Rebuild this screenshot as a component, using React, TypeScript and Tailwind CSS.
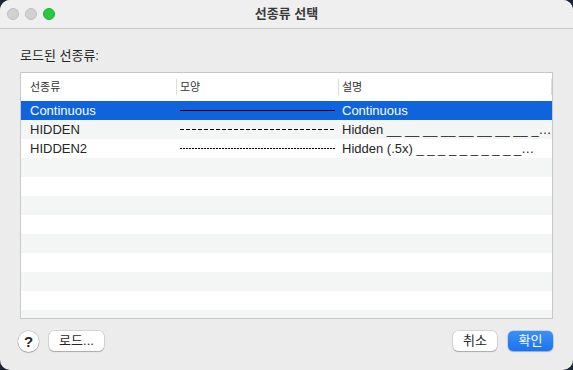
import React from "react";

type Row = { name: string; dash: string | null; desc: string };

const ROWS: Row[] = [
  { name: "Continuous", dash: null, desc: "Continuous" },
  { name: "HIDDEN", dash: "4 2", desc: "Hidden __ __ __ __ __ __ __ __ _…" },
  { name: "HIDDEN2", dash: "2 1", desc: "Hidden (.5x) _ _ _ _ _ _ _ _ _ _…" },
];

const FONT = '"Liberation Sans", "Noto Sans CJK KR", sans-serif';

function LineSample({ dash, color }: { dash: string | null; color: string }) {
  return (
    <svg width="155" height="3" className="block">
      <line
        x1="0"
        y1="1.5"
        x2="155"
        y2="1.5"
        stroke={color}
        strokeWidth="1"
        strokeDasharray={dash ?? undefined}
      />
    </svg>
  );
}

export default function App() {
  const blank = Array.from({ length: 10 });

  return (
    <div className="w-[573px] h-[370px] bg-[#1c2533]" style={{ fontFamily: FONT }}>
      <div className="w-full h-full rounded-[10px] overflow-hidden bg-[#ececec] flex flex-col">
        {/* title bar */}
        <div className="relative h-[29px] shrink-0 bg-[#efefef] border-b border-[#c9c9c9] flex items-center justify-center">
          <div className="absolute left-[7px] top-[8px] flex gap-[6px]">
            <span className="w-[12px] h-[12px] rounded-full bg-[#d1d1d1] border border-[#bdbdbd]" />
            <span className="w-[12px] h-[12px] rounded-full bg-[#d1d1d1] border border-[#bdbdbd]" />
            <span className="w-[12px] h-[12px] rounded-full bg-[#28c83f] border border-[#1fb033]" />
          </div>
          <span className="text-[13px] font-bold text-[#3a3a3a]">선종류 선택</span>
        </div>

        {/* body */}
        <div className="flex-1 flex flex-col px-[20px]">
          <div className="mt-[19px] text-[13px] leading-[16px] text-[#262626]">로드된 선종류:</div>

          <div className="mt-[8px] h-[247px] border border-[#c8c8c8] bg-white overflow-hidden flex flex-col">
            {/* header */}
            <div className="h-[28px] shrink-0 flex items-center text-[11px] text-[#333]">
              <div className="w-[155px] pl-[9px]">선종류</div>
              <div className="w-[1px] h-[16px] bg-[#dcdcdc]" />
              <div className="w-[161px] pl-[3px]">모양</div>
              <div className="w-[1px] h-[16px] bg-[#dcdcdc]" />
              <div className="flex-1 pl-[3px]">설명</div>
              <div className="w-[1px] h-[16px] bg-[#dcdcdc]" />
            </div>

            {ROWS.map((r, i) => {
              const sel = i === 0;
              const bg = sel
                ? "bg-[#0f63dc] text-white"
                : i % 2 === 1
                ? "bg-[#f4f5f5] text-[#262626]"
                : "bg-white text-[#262626]";
              return (
                <div key={r.name} className={`h-[19px] shrink-0 flex items-center text-[13px] leading-[19px] ${bg}`}>
                  <div className="w-[156px] pl-[9px]">{r.name}</div>
                  <div className="w-[162px] pl-[3px]">
                    <LineSample dash={r.dash} color="#000" />
                  </div>
                  <div className="flex-1 pl-[3px] whitespace-nowrap">{r.desc}</div>
                </div>
              );
            })}

            {blank.map((_, i) => (
              <div
                key={i}
                className={`h-[19px] shrink-0 ${(i + 3) % 2 === 1 ? "bg-[#f4f5f5]" : "bg-white"}`}
              />
            ))}
          </div>
        </div>

        {/* footer */}
        <div className="h-[50px] shrink-0 flex items-start pt-[11px] pl-[18px] pr-[20px] text-[13px] text-[#262626]">
          <button className="w-[21px] h-[21px] rounded-full bg-white shadow-[0_0_0_0.5px_rgba(0,0,0,0.2),0_1px_1px_rgba(0,0,0,0.2)] flex items-center justify-center text-[15px] font-bold leading-none">
            ?
          </button>
          <button className="ml-[10px] w-[55px] h-[20px] rounded-[5px] bg-white shadow-[0_0_0_0.5px_rgba(0,0,0,0.2),0_1px_1px_rgba(0,0,0,0.2)] leading-[20px]">
            로드...
          </button>
          <div className="flex-1" />
          <button className="w-[44px] h-[20px] rounded-[5px] bg-white shadow-[0_0_0_0.5px_rgba(0,0,0,0.2),0_1px_1px_rgba(0,0,0,0.2)] leading-[20px]">
            취소
          </button>
          <button className="ml-[11px] w-[45px] h-[20px] rounded-[5px] bg-gradient-to-b from-[#3b8ff9] to-[#1a73f0] text-white shadow-[0_0_0_0.5px_rgba(0,80,200,0.3),0_1px_1px_rgba(0,0,0,0.2)] leading-[20px]">
            확인
          </button>
        </div>
      </div>
    </div>
  );
}
